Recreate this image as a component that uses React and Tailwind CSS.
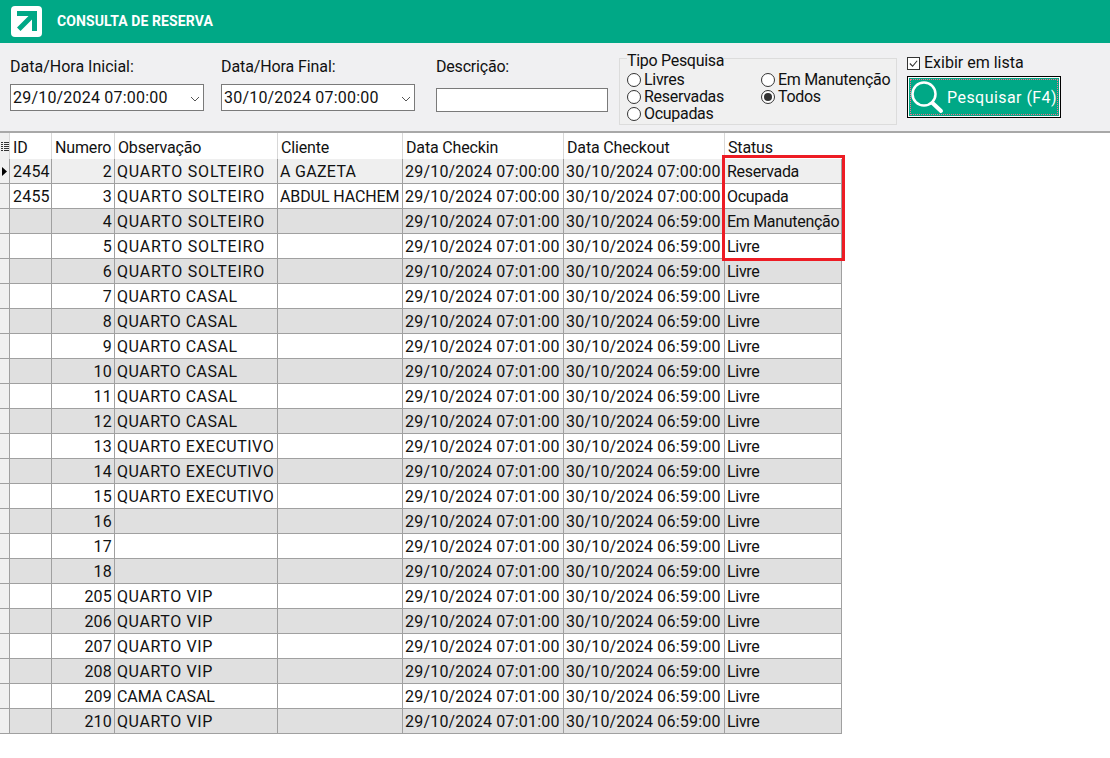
const CHECKIN = "29/10/2024 07:01:00";
const CHECKOUT = "30/10/2024 06:59:00";

const rows = [
  { id: "2454", n: 2, obs: "QUARTO SOLTEIRO", cli: "A GAZETA", a: "29/10/2024 07:00:00", b: "30/10/2024 07:00:00", st: "Reservada" },
  { id: "2455", n: 3, obs: "QUARTO SOLTEIRO", cli: "ABDUL HACHEM", a: "29/10/2024 07:00:00", b: "30/10/2024 07:00:00", st: "Ocupada" },
  { n: 4, obs: "QUARTO SOLTEIRO", st: "Em Manutenção" },
  { n: 5, obs: "QUARTO SOLTEIRO" },
  { n: 6, obs: "QUARTO SOLTEIRO" },
  { n: 7, obs: "QUARTO CASAL" },
  { n: 8, obs: "QUARTO CASAL" },
  { n: 9, obs: "QUARTO CASAL" },
  { n: 10, obs: "QUARTO CASAL" },
  { n: 11, obs: "QUARTO CASAL" },
  { n: 12, obs: "QUARTO CASAL" },
  { n: 13, obs: "QUARTO EXECUTIVO" },
  { n: 14, obs: "QUARTO EXECUTIVO" },
  { n: 15, obs: "QUARTO EXECUTIVO" },
  { n: 16, obs: "" },
  { n: 17, obs: "" },
  { n: 18, obs: "" },
  { n: 205, obs: "QUARTO VIP" },
  { n: 206, obs: "QUARTO VIP" },
  { n: 207, obs: "QUARTO VIP" },
  { n: 208, obs: "QUARTO VIP" },
  { n: 209, obs: "CAMA CASAL" },
  { n: 210, obs: "QUARTO VIP" },
];

const COLS = "grid grid-cols-[10px_42px_63px_163px_125px_161px_161px_117px]";

const OBS_TRACK = {
  "QUARTO SOLTEIRO": "tracking-[0.8px]",
  "QUARTO CASAL": "tracking-[0.5px]",
  "QUARTO EXECUTIVO": "tracking-[0.5px]",
  "QUARTO VIP": "tracking-[0.6px]",
  "CAMA CASAL": "tracking-[-0.1px]",
};

const CLI_TRACK = {
  "A GAZETA": "tracking-[0.3px]",
  "ABDUL HACHEM": "tracking-[-0.1px]",
};

function Chevron() {
  return (
    <svg width="10" height="6" viewBox="0 0 10 6" fill="none" stroke="#555" strokeWidth="1" className="mt-[1px]">
      <path d="M1 1l4 4 4-4" />
    </svg>
  );
}

function DateSelect({ value }) {
  return (
    <div className="flex h-[27px] w-[194px] items-center justify-between border border-[#7a7a7a] bg-white pl-[2px] pr-[3px] pt-[1px] leading-none tracking-[0.2px]">
      <span>{value}</span>
      <Chevron />
    </div>
  );
}

function Radio({ label, checked }) {
  return (
    <div className="flex h-[17px] items-center gap-[3px]">
      <span className="flex size-[14px] items-center justify-center rounded-full border border-[#333] bg-white">
        {checked && <span className="size-[8px] rounded-full bg-[#333]" />}
      </span>
      <span className="tracking-[-0.3px]">{label}</span>
    </div>
  );
}

function Cell({ children, className = "" }) {
  return (
    <div className={`overflow-hidden whitespace-nowrap border-b border-r border-[#a0a0a0] pl-[2px] pr-[2px] leading-[25px] ${className}`}>
      {children}
    </div>
  );
}

export default function App() {
  return (
    <div
      className="h-[758px] w-[1110px] overflow-hidden bg-white text-[16px] text-[#111]"
      style={{ fontFamily: "Roboto, sans-serif" }}
    >
      <header className="flex h-[43px] items-center bg-[#00a886] pl-[11px]">
        <svg width="31" height="31" viewBox="0 0 31 31">
          <rect width="31" height="31" rx="4" fill="#fff" />
          <path d="M6 5h20v20h-5V13.5L9.5 25 6 21.5 17.5 10H6z" fill="#00a886" />
        </svg>
        <h1 className="ml-[15px] text-[14px] font-bold tracking-[0.1px] text-white">CONSULTA DE RESERVA</h1>
      </header>

      <div className="flex h-[90px] items-start border-b-2 border-[#a8a8a8] bg-[#f0f0f2] pl-[10px]">
        <div className="mt-[13px] flex w-[211px] flex-col gap-[6px]">
          <label className="leading-[22px]">Data/Hora Inicial:</label>
          <DateSelect value="29/10/2024 07:00:00" />
        </div>
        <div className="mt-[13px] flex w-[215px] flex-col gap-[6px]">
          <label className="leading-[22px] tracking-[-0.1px]">Data/Hora Final:</label>
          <DateSelect value="30/10/2024 07:00:00" />
        </div>
        <div className="mt-[13px] flex w-[183px] flex-col gap-[10px]">
          <label className="leading-[22px] tracking-[-0.2px]">Descrição:</label>
          <input className="h-[24px] w-[172px] border border-[#7a7a7a] bg-white" />
        </div>
        <fieldset className="mt-[5px] h-[77px] w-[278px] border border-[#dcdcdc] bg-[#f0f0f0] pl-[7px]">
          <legend className="pt-[4px] leading-[17px] tracking-[-0.3px]">Tipo Pesquisa</legend>
          <div className="mt-[2px] grid grid-cols-[134px_1fr] leading-none">
            <div>
              <Radio label="Livres" />
              <Radio label="Reservadas" />
              <Radio label="Ocupadas" />
            </div>
            <div>
              <Radio label="Em Manutenção" />
              <Radio label="Todos" checked />
            </div>
          </div>
        </fieldset>
        <div className="ml-[10px] mt-[10px] flex flex-col">
          <div className="flex h-[20px] items-center gap-[4px]">
            <span className="flex size-[13px] items-center justify-center border border-[#333] bg-white">
              <svg width="11" height="11" viewBox="0 0 12 12" fill="none" stroke="#333" strokeWidth="1.2">
                <path d="M2 6l3 3 5-6" />
              </svg>
            </span>
            <span>Exibir em lista</span>
          </div>
          <button className="mt-[3px] h-[42px] w-[154px] border border-black bg-white p-[1px] text-white">
            <span className="flex h-full w-full items-center bg-[#00a886] p-[1px]">
              <span className="flex h-full w-full items-center border border-dotted border-[#ff6f8f] text-left">
                <svg width="33" height="34" viewBox="0 0 33 34" fill="none" stroke="#fff" className="shrink-0">
                  <circle cx="13" cy="14" r="11.5" strokeWidth="2.5" />
                  <path d="M21.5 23L30 31" strokeWidth="4" strokeLinecap="round" />
                </svg>
                <span className="ml-[3px] whitespace-nowrap pt-[1px] tracking-[0.45px]">Pesquisar (F4)</span>
              </span>
            </span>
          </button>
        </div>
      </div>

      <div className="relative w-[842px]">
        <div className={`${COLS} h-[26px]`}>
          <div className="flex items-center justify-center border-r border-[#d8d8d8] bg-[#f0f0f0]">
            <svg width="8" height="9" viewBox="0 0 8 9" fill="#333">
              <path d="M0 0h2v1H0zM3 0h5v1H3zM0 2h2v1H0zM3 2h5v1H3zM0 4h2v1H0zM3 4h5v1H3zM0 6h2v1H0zM3 6h5v1H3zM0 8h2v1H0zM3 8h5v1H3z" />
            </svg>
          </div>
          {["ID", "Numero", "Observação", "Cliente", "Data Checkin", "Data Checkout", "Status"].map((h) => (
            <div key={h} className="overflow-hidden whitespace-nowrap border-r border-[#d8d8d8] px-[3px] leading-[29px] tracking-[-0.15px] last:border-r-0">
              {h}
            </div>
          ))}
        </div>

        {rows.map((r, i) => {
          const bg = i === 0 ? "bg-[#efefef]" : i % 2 === 0 ? "bg-[#e0e0e0]" : "bg-white";
          return (
            <div key={r.n} className={`${COLS} h-[25px] ${bg}`}>
              <div className="flex items-center justify-center border-b border-r border-[#a0a0a0] bg-[#f0f0f0]">
                {i === 0 && (
                  <svg width="5" height="9" viewBox="0 0 5 9" fill="#000">
                    <path d="M0 0l5 4.5L0 9z" />
                  </svg>
                )}
              </div>
              <Cell className="pl-[3px] tracking-[0.2px]">{r.id}</Cell>
              <Cell className="text-right tracking-[0.2px]">{r.n}</Cell>
              <Cell className={OBS_TRACK[r.obs] || ""}>{r.obs}</Cell>
              <Cell className={CLI_TRACK[r.cli] || ""}>{r.cli}</Cell>
              <Cell className="tracking-[0.2px]">{r.a || CHECKIN}</Cell>
              <Cell className="tracking-[0.2px]">{r.b || CHECKOUT}</Cell>
              <Cell className="tracking-[-0.3px]">{r.st || "Livre"}</Cell>
            </div>
          );
        })}

        <div className="pointer-events-none absolute left-[722px] top-[22px] h-[106px] w-[123px] border-[3px] border-[#ed1c24]" />
      </div>
    </div>
  );
}
